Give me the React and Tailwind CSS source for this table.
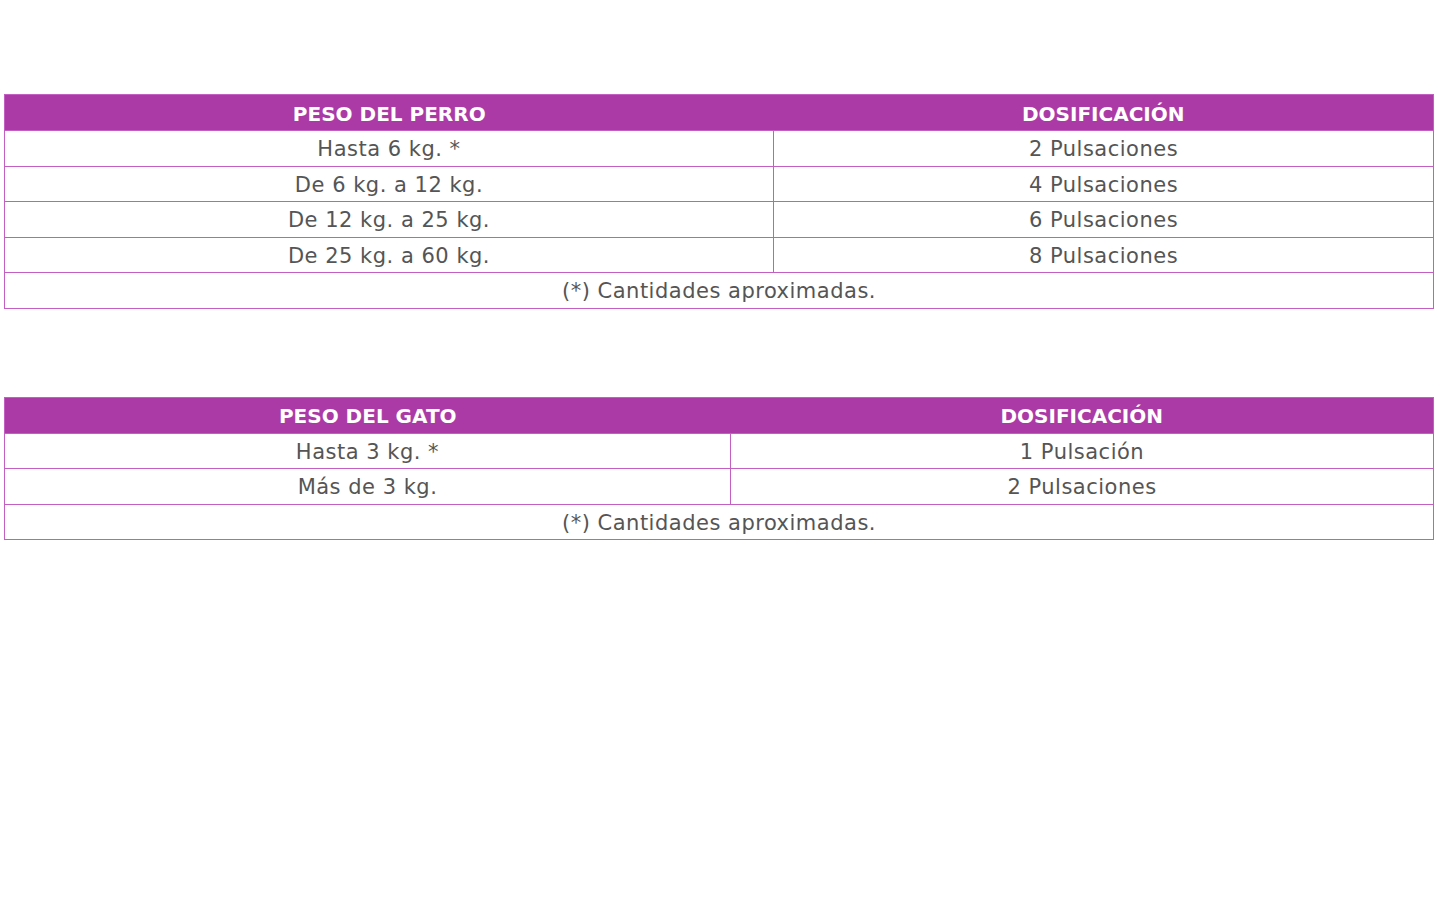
import React from "react";

const perro = [
  ["Hasta 6 kg. *", "2 Pulsaciones"],
  ["De 6 kg. a 12 kg.", "4 Pulsaciones"],
  ["De 12 kg. a 25 kg.", "6 Pulsaciones"],
  ["De 25 kg. a 60 kg.", "8 Pulsaciones"],
];

const gato = [
  ["Hasta 3 kg. *", "1 Pulsación"],
  ["Más de 3 kg.", "2 Pulsaciones"],
];

const DoseTable = ({ title, rows, firstCol }) => {
  return (
    <table className="w-full border-collapse border border-[#c35ec3] text-center">
      <thead>
        <tr className="h-[36px] bg-[#ab3aa6] text-white">
          <th className={`${firstCol} px-0 pb-0 pt-[2px] text-[20px] font-bold tracking-normal`}>{title}</th>
          <th className="px-0 pb-0 pt-[2px] text-[20px] font-bold tracking-normal">DOSIFICACIÓN</th>
        </tr>
      </thead>
      <tbody>
        {rows.map((r) => (
          <tr key={r[0]} className="h-[35.5px]">
            <td className="border border-[#c35ec3] px-0 pb-0 pt-[3px]">{r[0]}</td>
            <td className="border border-[#c35ec3] px-0 pb-0 pt-[3px]">{r[1]}</td>
          </tr>
        ))}
        <tr className="h-[35.5px]">
          <td colSpan={2} className="border border-[#c35ec3] px-0 pb-0 pt-[3px]">
            (*) Cantidades aproximadas.
          </td>
        </tr>
      </tbody>
    </table>
  );
};

export default function App() {
  return (
    <div className="min-h-screen bg-white pl-[4px] pr-[6px] pt-[94px] font-['DejaVu_Sans',sans-serif] text-[21px] leading-none tracking-[0.5px] text-[#555]">
      <DoseTable title="PESO DEL PERRO" rows={perro} firstCol="w-[769px]" />
      <div className="h-[88px]" />
      <DoseTable title="PESO DEL GATO" rows={gato} firstCol="w-[726px]" />
    </div>
  );
}
